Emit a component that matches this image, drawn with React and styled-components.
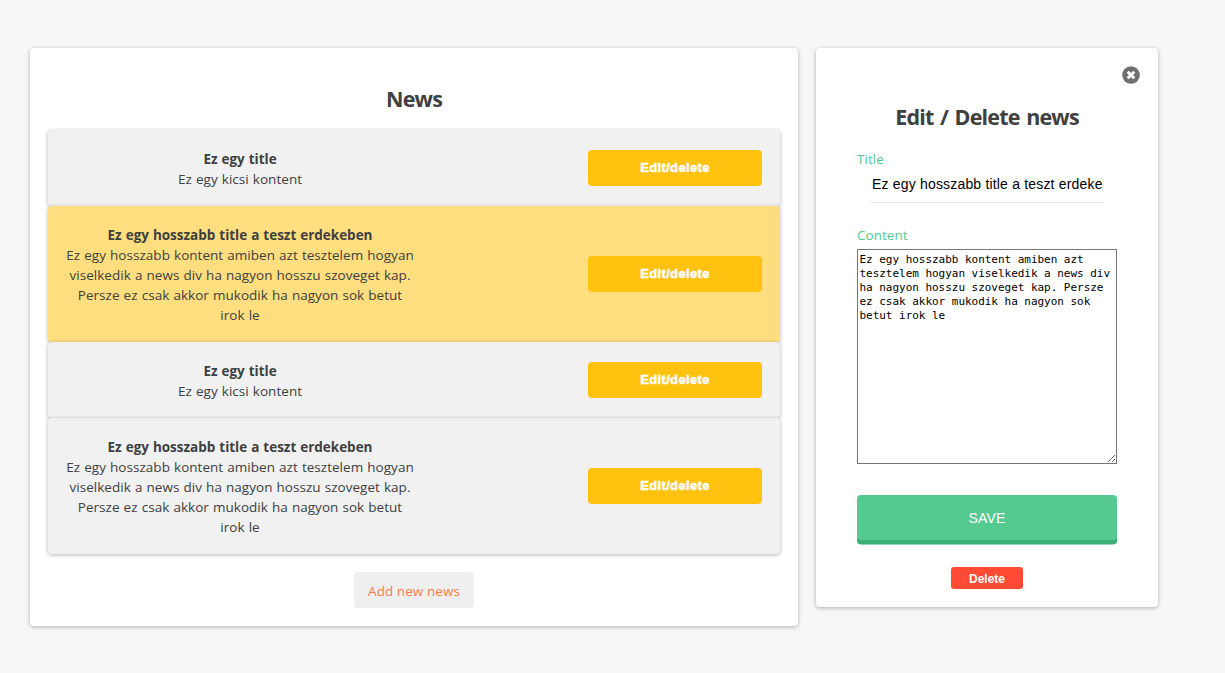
import React from "react";
import styled, { createGlobalStyle } from "styled-components";

const GlobalStyle = createGlobalStyle`
  *, *::before, *::after { box-sizing: border-box; }
  body {
    margin: 0;
    background: #f7f7f7;
    color: #404040;
    font-family: "Segoe UI", "Open Sans", "Noto Sans", sans-serif;
    font-size: 13.5px;
    line-height: 20px;
    letter-spacing: 0.03px;
    word-spacing: 0.55px;
  }
`;

const Page = styled.main`
  display: flex;
  align-items: flex-start;
  gap: 18px;
  min-height: 673px;
  padding: 48px 30px;
`;

const Card = styled.section`
  width: ${(p) => p.$width}px;
  height: ${(p) => p.$height}px;
  flex: none;
  display: flex;
  flex-direction: column;
  align-items: center;
  padding: 18px;
  background: #fff;
  border-radius: 4px;
  box-shadow: 0 1px 4px rgba(0, 0, 0, 0.3);
`;

const Heading = styled.h2`
  margin: ${(p) => p.$margin};
  font-size: 21.5px;
  line-height: 30px;
  font-weight: 700;
  letter-spacing: -0.8px;
  word-spacing: 1.7px;
  white-space: nowrap;
`;

const NewsList = styled.ul`
  align-self: stretch;
  margin: 0 0 18px;
  padding: 0;
  list-style: none;
`;

const NewsItem = styled.li`
  display: flex;
  align-items: center;
  justify-content: space-between;
  padding: 18px;
  background: ${(p) => (p.$active ? "#ffde7f" : "#f1f1f1")};
  border-radius: 4px;
  box-shadow: 0 1px 4px rgba(0, 0, 0, 0.3);
`;

const NewsText = styled.div`
  width: 348px;
  padding-top: 1px;
  margin-bottom: -1px;
  text-align: center;
`;

const NewsTitle = styled.div`
  font-weight: 700;
  letter-spacing: -0.02px;
`;

const EditButton = styled.button`
  width: 174px;
  height: 36px;
  padding: 0 0 2px;
  border: 0;
  border-radius: 4px;
  background: #ffc20f;
  color: #fff;
  font: 900 13px "Liberation Sans", Arial, sans-serif;
  letter-spacing: 0.35px;
  -webkit-text-stroke: 0.5px #fff;
`;

const AddButton = styled.button`
  width: 120px;
  height: 36px;
  padding: 2px 0 0;
  border: 0;
  border-radius: 4px;
  background: #efefef;
  color: #ff7a45;
  font: inherit;
  letter-spacing: 0.06px;
`;

const CloseButton = styled.button`
  align-self: flex-end;
  width: 18px;
  height: 18px;
  padding: 0;
  border: 0;
  background: none;
  svg { display: block; }
`;

const Form = styled.form`
  width: 260px;
  display: flex;
  flex-direction: column;
  align-items: center;
`;

const Label = styled.label`
  align-self: flex-start;
  color: #56c991;
`;

const TitleInput = styled.input`
  width: 234px;
  height: 34px;
  margin-bottom: 22px;
  padding: 0 1px 4px 2px;
  border: 0;
  border-bottom: 1px solid #e8e8e8;
  outline: 0;
  background: #fff;
  color: #000;
  font: 14px "Liberation Sans", Arial, sans-serif;
  letter-spacing: 0.18px;
`;

const ContentArea = styled.textarea`
  width: 260px;
  height: 215px;
  margin: 4px 0 31px;
  padding: 3px 2px 2px 1.5px;
  border: 1px solid #767676;
  border-radius: 0;
  background: #fff;
  color: #000;
  font: 11px/14px "DejaVu Sans Mono", monospace;
  letter-spacing: -0.03px;
  outline: 0;
`;

const SaveButton = styled.button`
  width: 260px;
  height: 45px;
  padding: 0;
  border: 0;
  border-radius: 4px;
  background: #56c991;
  box-shadow: 0 4.5px 0 #3cb076;
  color: #fff;
  font: 14px "Liberation Sans", Arial, sans-serif;
  letter-spacing: 0.2px;
`;

const DeleteButton = styled.button`
  width: 72px;
  height: 22px;
  margin-top: 27px;
  padding: 2px 0 0;
  border: 0;
  border-radius: 3px;
  background: #ff4b33;
  color: #fff;
  font: 700 12px "Liberation Sans", Arial, sans-serif;
`;

const CloseIcon = () => (
  <svg width="18" height="18" viewBox="0 0 18 18">
    <circle cx="9" cy="9" r="8.8" fill="#6f6f6f" />
    <path d="M5.7 5.7 12.3 12.3M12.3 5.7 5.7 12.3" stroke="#fff" strokeWidth="2.9" />
  </svg>
);

const shortNews = { title: "Ez egy title", content: "Ez egy kicsi kontent" };
const longNews = {
  title: "Ez egy hosszabb title a teszt erdekeben",
  content:
    "Ez egy hosszabb kontent amiben azt tesztelem hogyan viselkedik a news div ha nagyon hosszu szoveget kap. Persze ez csak akkor mukodik ha nagyon sok betut irok le",
};
const news = [shortNews, longNews, shortNews, longNews];
const selected = 1;

export default function App() {
  return (
    <>
      <GlobalStyle />
      <Page>
        <Card $width={768} $height={578}>
          <Heading $margin="18px 0 16px">News</Heading>
          <NewsList>
            {news.map((item, i) => (
              <NewsItem key={i} $active={i === selected}>
                <NewsText>
                  <NewsTitle>{item.title}</NewsTitle>
                  <div>{item.content}</div>
                </NewsText>
                <EditButton>Edit/delete</EditButton>
              </NewsItem>
            ))}
          </NewsList>
          <AddButton>Add new news</AddButton>
        </Card>
        <Card $width={342} $height={559}>
          <CloseButton aria-label="Close"><CloseIcon /></CloseButton>
          <Heading $margin="18px 0 17px">Edit / Delete news</Heading>
          <Form onSubmit={(e) => e.preventDefault()}>
            <Label htmlFor="title">Title</Label>
            <TitleInput id="title" defaultValue={longNews.title} />
            <Label htmlFor="content">Content</Label>
            <ContentArea id="content" defaultValue={longNews.content} spellCheck={false} />
            <SaveButton>SAVE</SaveButton>
            <DeleteButton type="button">Delete</DeleteButton>
          </Form>
        </Card>
      </Page>
    </>
  );
}
